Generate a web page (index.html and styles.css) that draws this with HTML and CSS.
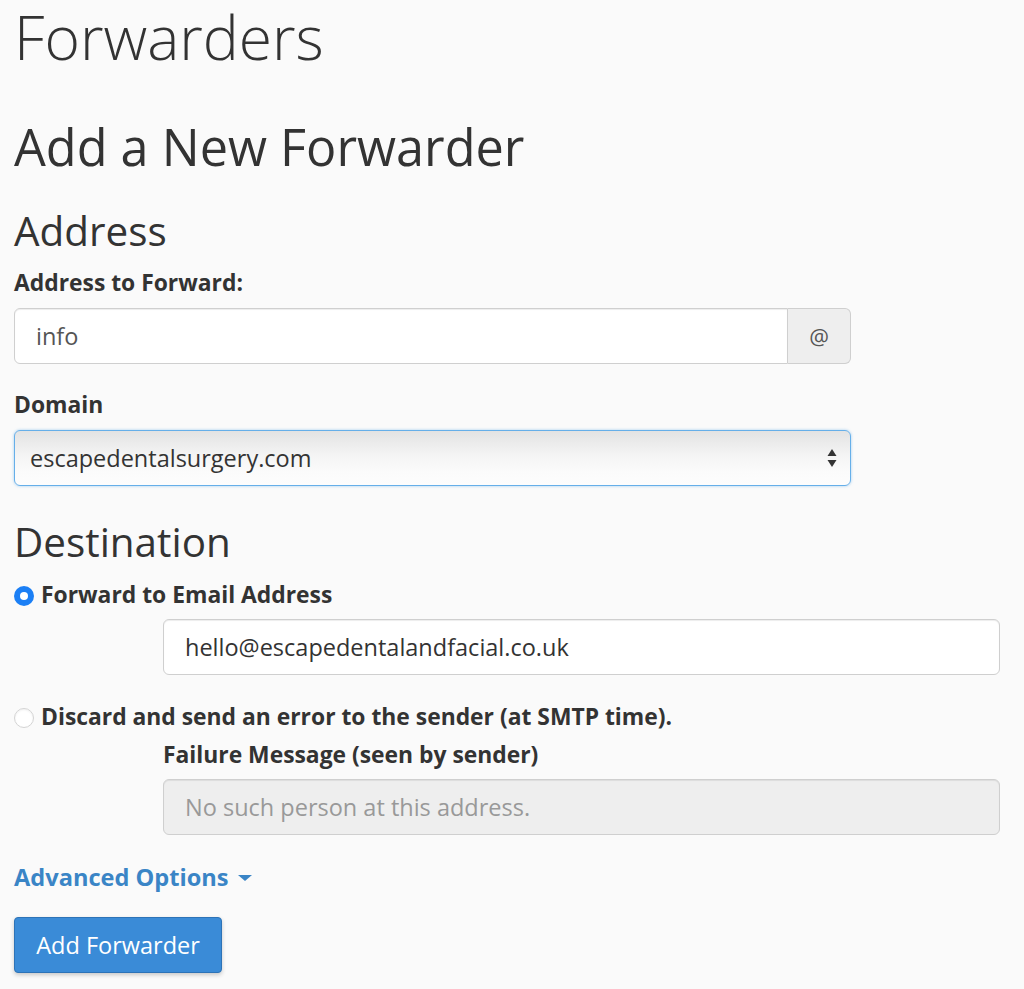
FILE: index.html
```html
<!DOCTYPE html>
<html lang="en">
<head>
<meta charset="utf-8">
<title>Forwarders</title>
<link rel="stylesheet" href="styles.css">
</head>
<body>
<div class="page">
  <h1 class="title">Forwarders</h1>
  <h2 class="subtitle">Add a New Forwarder</h2>

  <h3 class="section section-address">Address</h3>
  <label class="label label-first">Address to Forward:</label>
  <div class="input-group">
    <div class="input input-grouped">info</div>
    <span class="addon">@</span>
  </div>

  <label class="label label-domain">Domain</label>
  <div class="select">
    <span class="select-text">escapedentalsurgery.com</span>
    <svg class="select-arrows" width="10" height="22" viewBox="0 0 10 22" aria-hidden="true">
      <path d="M5 2 L9.5 9 L0.5 9 Z" fill="#333"/>
      <path d="M5 20 L9.5 13 L0.5 13 Z" fill="#333"/>
    </svg>
  </div>

  <h3 class="section section-destination">Destination</h3>

  <div class="radio-row radio-forward">
    <span class="radio radio-checked"></span>
    <span class="radio-label">Forward to Email Address</span>
  </div>
  <div class="indent">
    <div class="input input-email">hello@escapedentalandfacial.co.uk</div>
  </div>

  <div class="radio-row radio-discard">
    <span class="radio"></span>
    <span class="radio-label">Discard and send an error to the sender (at SMTP time).</span>
  </div>
  <div class="indent">
    <label class="label label-failure">Failure Message (seen by sender)</label>
    <div class="input input-disabled">No such person at this address.</div>
  </div>

  <a class="advanced">Advanced Options <span class="caret"></span></a>

  <button class="btn-primary">Add Forwarder</button>
</div>
</body>
</html>
```

FILE: styles.css
```css
html, body {
  margin: 0;
  padding: 0;
  background: #fafafa;
}

body {
  font-family: "Open Sans", "Liberation Sans", sans-serif;
  color: #333;
}

.page {
  padding: 1px 14px 20px 14px;
  width: 986px;
}

.title {
  margin: 0;
  font-size: 60.5px;
  font-weight: 300;
  line-height: 72px;
  color: #333;
}

.subtitle {
  margin: 44px 0 0 0;
  font-size: 50.4px;
  font-weight: 400;
  line-height: 60px;
  color: #333;
}

.section {
  margin: 0;
  font-size: 40.4px;
  font-weight: 400;
  line-height: 48px;
  color: #333;
}

.section-address {
  margin-top: 30px;
}

.section-destination {
  margin-top: 32px;
}

.label {
  display: block;
  font-size: 22.85px;
  font-weight: 700;
  line-height: 30px;
  color: #333;
}

.label-first {
  margin-top: 13px;
}

.label-domain {
  margin-top: 26px;
}

.input-group {
  display: flex;
  width: 837px;
  margin-top: 10px;
}

.input {
  box-sizing: border-box;
  height: 56px;
  display: flex;
  align-items: center;
  padding: 0 21px;
  background: #fff;
  border: 1px solid #cfcfcf;
  border-radius: 6px;
  box-shadow: inset 0 1px 1px rgba(0, 0, 0, 0.075);
  font-size: 23.5px;
  color: #555;
}

.input-grouped {
  flex: 1;
  border-top-right-radius: 0;
  border-bottom-right-radius: 0;
}

.addon {
  box-sizing: border-box;
  width: 63px;
  height: 56px;
  display: flex;
  align-items: center;
  justify-content: center;
  background: #eee;
  border: 1px solid #cfcfcf;
  border-left: 0;
  border-radius: 0 6px 6px 0;
  font-size: 22px;
  color: #555;
}

.select {
  box-sizing: border-box;
  width: 837px;
  height: 56px;
  margin-top: 10px;
  display: flex;
  align-items: center;
  justify-content: space-between;
  padding: 0 13px 0 15px;
  border: 1px solid #66afe9;
  border-radius: 6px;
  background: linear-gradient(to bottom, #e3e3e3 0%, #f4f4f4 45%, #fbfbfb 75%, #fdfdfd 100%);
  box-shadow: 0 0 3px rgba(102, 175, 233, 0.6);
  font-size: 23.5px;
  color: #333;
}

.select-arrows {
  display: block;
}

.radio-row {
  display: flex;
  align-items: center;
  gap: 7px;
  font-size: 22.85px;
  font-weight: 700;
  line-height: 30px;
  color: #333;
}

.radio-forward {
  margin-top: 14px;
}

.radio-discard {
  margin-top: 27px;
}

.radio {
  box-sizing: border-box;
  width: 20px;
  height: 20px;
  border-radius: 50%;
  background: #fff;
  border: 1px solid #d4d4d4;
  box-shadow: inset 0 1px 2px rgba(0, 0, 0, 0.06);
  flex: none;
  position: relative;
  top: 1px;
}

.radio-checked {
  border: 0;
  background: #1b7ff5;
  box-shadow: none;
}

.radio-checked::after {
  content: "";
  position: absolute;
  left: 6px;
  top: 6px;
  width: 8px;
  height: 8px;
  border-radius: 50%;
  background: #fff;
}

.indent {
  margin-left: 149px;
  width: 837px;
}

.input-email {
  margin-top: 9px;
  width: 837px;
  color: #333;
}

.label-failure {
  margin-top: 8px;
}

.input-disabled {
  margin-top: 9px;
  width: 837px;
  background: #eee;
  color: #999;
}

.advanced {
  display: inline-flex;
  align-items: center;
  gap: 9px;
  margin-top: 27px;
  font-size: 23.6px;
  font-weight: 700;
  line-height: 30px;
  color: #3a85c6;
  text-decoration: none;
}

.caret {
  width: 0;
  height: 0;
  border-left: 7px solid transparent;
  border-right: 7px solid transparent;
  border-top: 6px solid #3a85c6;
  margin-top: 2px;
}

.btn-primary {
  display: block;
  box-sizing: border-box;
  margin-top: 25px;
  width: 208px;
  height: 56px;
  padding: 0;
  background: #3a8bd7;
  border: 1px solid #2d73b7;
  border-radius: 4px;
  box-shadow: 0 2px 4px rgba(0, 0, 0, 0.2);
  font-family: "Open Sans", "Liberation Sans", sans-serif;
  font-size: 23.5px;
  color: #fff;
}
```
